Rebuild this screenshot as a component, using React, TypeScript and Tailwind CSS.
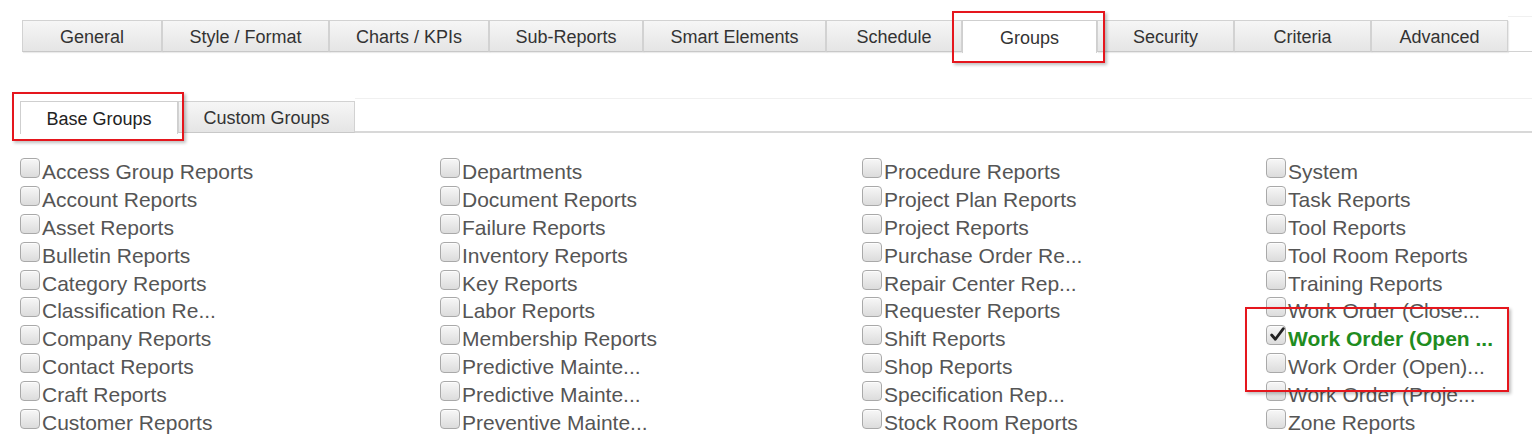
import React from 'react';

const topTabs = [
  { label: 'General', w: 'w-[140px]' },
  { label: 'Style / Format', w: 'w-[167px]' },
  { label: 'Charts / KPIs', w: 'w-[160px]' },
  { label: 'Sub-Reports', w: 'w-[154px]' },
  { label: 'Smart Elements', w: 'w-[183px]' },
  { label: 'Schedule', w: 'w-[136px]' },
  { label: 'Groups', w: 'w-[135px]', active: true },
  { label: 'Security', w: 'w-[137px]' },
  { label: 'Criteria', w: 'w-[137px]' },
  { label: 'Advanced', w: 'w-[137px]' },
];

const columns: { w: string; items: string[] }[] = [
  {
    w: 'w-[420px]',
    items: [
      'Access Group Reports',
      'Account Reports',
      'Asset Reports',
      'Bulletin Reports',
      'Category Reports',
      'Classification Re...',
      'Company Reports',
      'Contact Reports',
      'Craft Reports',
      'Customer Reports',
    ],
  },
  {
    w: 'w-[422px]',
    items: [
      'Departments',
      'Document Reports',
      'Failure Reports',
      'Inventory Reports',
      'Key Reports',
      'Labor Reports',
      'Membership Reports',
      'Predictive Mainte...',
      'Predictive Mainte...',
      'Preventive Mainte...',
    ],
  },
  {
    w: 'w-[404px]',
    items: [
      'Procedure Reports',
      'Project Plan Reports',
      'Project Reports',
      'Purchase Order Re...',
      'Repair Center Rep...',
      'Requester Reports',
      'Shift Reports',
      'Shop Reports',
      'Specification Rep...',
      'Stock Room Reports',
    ],
  },
  {
    w: 'flex-1',
    items: [
      'System',
      'Task Reports',
      'Tool Reports',
      'Tool Room Reports',
      'Training Reports',
      'Work Order (Close...',
      'Work Order (Open ...',
      'Work Order (Open)...',
      'Work Order (Proje...',
      'Zone Reports',
    ],
  },
];

function Checkbox({ checked }: { checked?: boolean }) {
  return (
    <span className="relative shrink-0 w-[20px] h-[20px] rounded-[4px] border border-[#a9a9a9] bg-linear-to-b from-[#f7f7f7] to-[#dcdcdc] shadow-[inset_0_1px_1px_rgba(255,255,255,0.8)]">
      {checked && (
        <svg className="absolute left-[2px] top-[0px]" width="17" height="17" viewBox="0 0 16 16">
          <path d="M2.5 8.5 L6 12.5 L13.5 2.5" fill="none" stroke="#222" strokeWidth="2.6" strokeLinecap="round" strokeLinejoin="round" />
        </svg>
      )}
    </span>
  );
}

export default function App() {
  return (
    <div className="relative w-[1532px] h-[448px] overflow-hidden bg-white font-['Liberation_Sans',Arial,sans-serif]">
      {/* Main tabs */}
      <div className="flex items-end pl-[22px] pt-[16px]">
        {topTabs.map((t) =>
          t.active ? (
            <div
              key={t.label}
              className={`${t.w} h-[33px] -mb-px pt-[3px] flex items-center justify-center bg-white border-t border-l border-r border-[#cfcfcf] text-[18px] text-[#333]`}
            >
              {t.label}
            </div>
          ) : (
            <div
              key={t.label}
              className={`${t.w} h-[32px] pt-[3px] flex items-center justify-center bg-linear-to-b from-[#f6f6f6] to-[#e5e5e5] border border-[#d2d2d2] border-b-[#c8c8c8] shadow-[1px_1px_1px_rgba(0,0,0,0.08)] text-[18px] text-[#333]`}
            >
              {t.label}
            </div>
          )
        )}
        <div className="flex-1 h-[36px] border-t border-[#f0f0f0] border-b border-b-[#d2d2d2]" />
      </div>

      {/* Sub tabs */}
      <div className="flex items-end pl-[20px] mt-[46px]">
        <div className="w-[158px] h-[33px] -mb-px pt-[3px] flex items-center justify-center bg-white border-t border-l border-r border-[#cfcfcf] text-[18px] text-[#222]">
          Base Groups
        </div>
        <div className="w-[177px] h-[32px] pt-[3px] flex items-center justify-center bg-linear-to-b from-[#f6f6f6] to-[#e5e5e5] border border-[#d2d2d2] border-b-[#c8c8c8] text-[18px] text-[#333]">
          Custom Groups
        </div>
        <div className="flex-1 h-[35px] border-t border-[#f0f0f0] border-b-2 border-b-[#d8d8d8]" />
      </div>

      {/* Group checkboxes */}
      <div className="flex pl-[20px] mt-[25px]">
        {columns.map((col, ci) => (
          <div key={ci} className={`${col.w} flex flex-col`}>
            {col.items.map((label, ri) => {
              const checked = ci === 3 && ri === 6;
              return (
                <div key={ri} className="flex items-start h-[27.9px]">
                  <Checkbox checked={checked} />
                  <span
                    className={`ml-[2px] leading-[28px] text-[21px] whitespace-nowrap ${
                      checked ? 'font-bold text-[#1f8c1f]' : 'text-[#555]'
                    }`}
                  >
                    {label}
                  </span>
                </div>
              );
            })}
          </div>
        ))}
      </div>

      {/* Annotation boxes */}
      <div className="absolute left-[952px] top-[11px] w-[153px] h-[52px] border-2 border-[#e5161d] shadow-[2px_2px_3px_rgba(0,0,0,0.25)]" />
      <div className="absolute left-[12px] top-[92px] w-[172px] h-[49px] border-2 border-[#e5161d] shadow-[2px_2px_3px_rgba(0,0,0,0.25)]" />
      <div className="absolute left-[1245px] top-[307px] w-[264px] h-[85px] border-2 border-[#e5161d] shadow-[2px_2px_3px_rgba(0,0,0,0.25)]" />
    </div>
  );
}
